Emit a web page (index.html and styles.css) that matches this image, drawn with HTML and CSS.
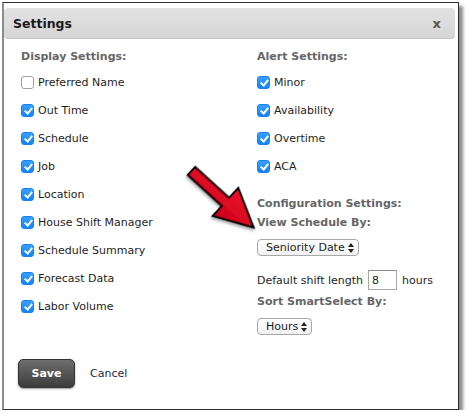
FILE: index.html
```html
<!DOCTYPE html>
<html lang="en">
<head>
    <meta charset="UTF-8">
    <meta name="viewport" content="width=device-width, initial-scale=1.0">
    <title>Settings</title>
    <link rel="stylesheet" href="styles.css">
</head>
<body>
    <div class="dialog">
        <div class="dialog-header">
            <span class="dialog-title">Settings</span>
            <span class="dialog-close">x</span>
        </div>

        <div class="dialog-body">
            <div class="column">
                <div class="heading">Display Settings:</div>
                <label class="row"><input type="checkbox" class="check">Preferred Name</label>
                <label class="row"><input type="checkbox" class="check" checked>Out Time</label>
                <label class="row"><input type="checkbox" class="check" checked>Schedule</label>
                <label class="row"><input type="checkbox" class="check" checked>Job</label>
                <label class="row"><input type="checkbox" class="check" checked>Location</label>
                <label class="row"><input type="checkbox" class="check" checked>House Shift Manager</label>
                <label class="row"><input type="checkbox" class="check" checked>Schedule Summary</label>
                <label class="row"><input type="checkbox" class="check" checked>Forecast Data</label>
                <label class="row"><input type="checkbox" class="check" checked>Labor Volume</label>
            </div>

            <div class="column">
                <div class="heading">Alert Settings:</div>
                <label class="row"><input type="checkbox" class="check" checked>Minor</label>
                <label class="row"><input type="checkbox" class="check" checked>Availability</label>
                <label class="row"><input type="checkbox" class="check" checked>Overtime</label>
                <label class="row"><input type="checkbox" class="check" checked>ACA</label>

                <div class="heading sub config">Configuration Settings:</div>
                <div class="heading sub">View Schedule By:</div>
                <div class="select select-wide">
                    <span>Seniority Date</span>
                    <svg class="updown" width="6" height="10" viewBox="0 0 6 10"><path d="M3 0 L6 4 L0 4 Z M0 6 L6 6 L3 10 Z" fill="#222"/></svg>
                </div>

                <div class="shift-row">
                    <span>Default shift length</span>
                    <input class="shift-input" type="text" value="8">
                    <span>hours</span>
                </div>
                <div class="heading sub sort">Sort SmartSelect By:</div>
                <div class="select select-short">
                    <span>Hours</span>
                    <svg class="updown" width="6" height="10" viewBox="0 0 6 10"><path d="M3 0 L6 4 L0 4 Z M0 6 L6 6 L3 10 Z" fill="#222"/></svg>
                </div>
            </div>
        </div>

        <div class="dialog-footer">
            <button class="btn-save">Save</button>
            <a class="btn-cancel" href="#">Cancel</a>
        </div>
    </div>

    <!-- pointer arrow laid over the dialog -->
    <svg class="pointer" width="466" height="417" viewBox="0 0 466 417">
        <defs>
            <linearGradient id="red" x1="0" y1="0" x2="0" y2="1">
                <stop offset="0" stop-color="#f0102a"/>
                <stop offset="1" stop-color="#c8001a"/>
            </linearGradient>
            <filter id="shadow" x="-20%" y="-20%" width="150%" height="150%">
                <feDropShadow dx="1" dy="2" stdDeviation="1.5" flood-color="#000" flood-opacity="0.35"/>
            </filter>
        </defs>
        <g transform="translate(191.5 171) rotate(42.3)" filter="url(#shadow)">
            <polygon points="0,-5.5 46,-5.5 46,-19 84,0 46,19 46,5.5 0,5.5" fill="url(#red)" stroke="#000" stroke-width="2" stroke-linejoin="miter"/>
        </g>
    </svg>
</body>
</html>
```

FILE: styles.css
```css
body {
    margin: 0;
    background: #fff;
    font-family: 'DejaVu Sans', Verdana, sans-serif;
    font-size: 11px;
    color: #1e1e1e;
    position: relative;
}
.dialog {
    box-sizing: border-box;
    margin: 2px 0 0 2px;
    width: 457px;
    height: 408px;
    background: #fff;
    border: 1px solid #2e2e2e;
    border-left: 2px solid #8c8c8c;
    box-shadow: 4px 4px 3px rgba(0, 0, 0, 0.45);
}
.dialog-header {
    margin: 5px 3px 0 0;
    height: 31px;
    border-radius: 4px;
    background: linear-gradient(#e2e2e2, #d6d6d6);
    border-bottom: 1px solid #c8c8c8;
    display: flex;
    align-items: center;
    justify-content: space-between;
    padding: 0 14px 0 9px;
    box-sizing: border-box;
}
.dialog-title {
    font-size: 12.5px;
    font-weight: bold;
    color: #1a1a1a;
}
.dialog-close {
    font-size: 13px;
    font-weight: bold;
    color: #555;
}
.dialog-body {
    display: grid;
    grid-template-columns: 236px 1fr;
    padding: 9px 0 0 17px;
}
.column {
    display: flex;
    flex-direction: column;
    align-items: flex-start;
}
.heading {
    font-weight: bold;
    color: #666;
    line-height: 18px;
}
.column > .heading:first-child {
    margin-bottom: 2px;
}
.heading.sub {
    line-height: 19px;
}
.heading.config {
    margin-top: 14px;
}
.heading.sort {
    margin-top: 2px;
}
.row {
    height: 28px;
    display: flex;
    align-items: center;
    white-space: nowrap;
}
.check {
    appearance: none;
    -webkit-appearance: none;
    box-sizing: border-box;
    width: 13px;
    height: 13px;
    margin: 0 4px 0 0;
    border-radius: 3px;
    border: 1px solid #a0a0a0;
    background: #fff;
    position: relative;
}
.check:checked {
    border-color: #1a7ff0;
    background: linear-gradient(#3aa0ff, #1383f5);
}
.check:checked::after {
    content: '';
    position: absolute;
    left: 3.5px;
    top: 1px;
    width: 3px;
    height: 6px;
    border: solid #fff;
    border-width: 0 2px 2px 0;
    transform: rotate(40deg);
}
.select {
    box-sizing: border-box;
    height: 17px;
    margin-top: 7px;
    border: 1px solid #a8a8a8;
    border-radius: 4px;
    background: linear-gradient(#fff, #f1f1f1);
    display: flex;
    align-items: center;
    justify-content: space-between;
    padding: 0 4px 0 8px;
    white-space: nowrap;
}
.select-wide {
    width: 102px;
}
.select-short {
    width: 55px;
}
.updown {
    display: block;
}
.shift-row {
    margin-top: 14px;
    height: 20px;
    display: flex;
    align-items: center;
    gap: 5px;
    white-space: nowrap;
}
.shift-input {
    box-sizing: border-box;
    width: 29px;
    height: 20px;
    margin: 0;
    padding: 0 3px;
    border: 1px solid #a8a8a8;
    border-top-color: #8a8a8a;
    font-family: inherit;
    font-size: 11px;
    color: #1e1e1e;
}
.dialog-footer {
    margin-top: 24px;
    padding-left: 14px;
    display: flex;
    align-items: center;
    gap: 15px;
}
.btn-save {
    width: 57px;
    height: 29px;
    border: 1px solid #333;
    border-radius: 5px;
    background: linear-gradient(#6e6e6e, #3c3c3c);
    box-shadow: 0 1px 2px rgba(0, 0, 0, 0.4);
    color: #fff;
    font-family: inherit;
    font-size: 11px;
    font-weight: bold;
}
.btn-cancel {
    color: #1c2a44;
    text-decoration: none;
}
.pointer {
    position: absolute;
    left: 0;
    top: 0;
    pointer-events: none;
}
```
